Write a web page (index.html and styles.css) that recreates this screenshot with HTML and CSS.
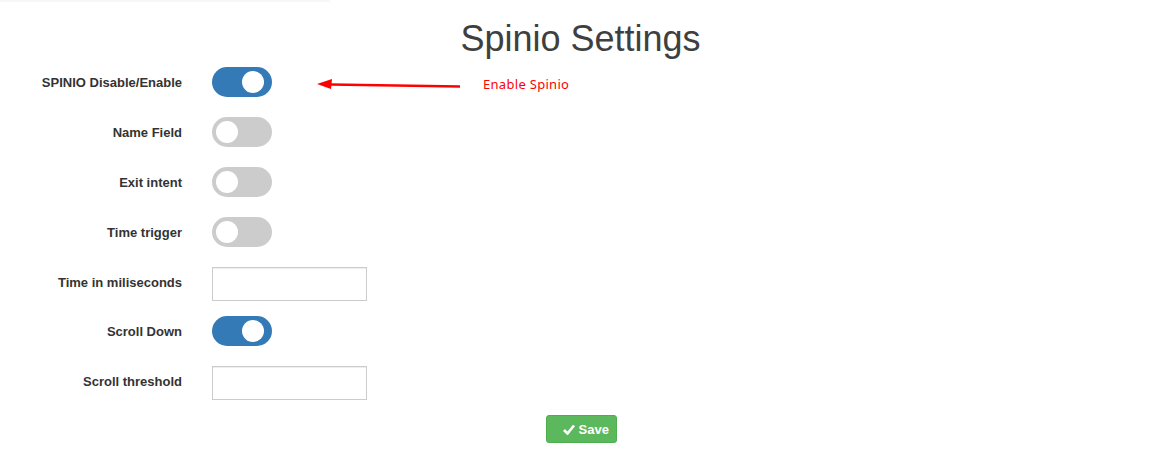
FILE: index.html
```html
<!DOCTYPE html>
<html>
<head>
<meta charset="utf-8">
<link rel="stylesheet" href="styles.css">
</head>
<body>
<div class="topline"></div>
<h1 class="title">Spinio Settings</h1>
<form class="settings">
  <div class="row">
    <label class="lbl">SPINIO Disable/Enable</label>
    <div class="ctl">
      <span class="switch on"><span class="knob"></span></span>
    </div>
    <div class="note">
      <svg class="arrow" width="150" height="14" viewBox="0 0 150 14">
        <path d="M14 6.5 L143 8.5" stroke="#ff0000" stroke-width="2.6" fill="none"/>
        <path d="M0 6 L15 1 L14 11 Z" fill="#ff0000"/>
      </svg>
      <span class="note-text">Enable Spinio</span>
    </div>
  </div>
  <div class="row">
    <label class="lbl">Name Field</label>
    <div class="ctl"><span class="switch"><span class="knob"></span></span></div>
  </div>
  <div class="row">
    <label class="lbl">Exit intent</label>
    <div class="ctl"><span class="switch"><span class="knob"></span></span></div>
  </div>
  <div class="row">
    <label class="lbl">Time trigger</label>
    <div class="ctl"><span class="switch"><span class="knob"></span></span></div>
  </div>
  <div class="row input-row">
    <label class="lbl">Time in miliseconds</label>
    <div class="ctl"><input class="field" type="text"></div>
  </div>
  <div class="row">
    <label class="lbl">Scroll Down</label>
    <div class="ctl"><span class="switch on"><span class="knob"></span></span></div>
  </div>
  <div class="row input-row">
    <label class="lbl">Scroll threshold</label>
    <div class="ctl"><input class="field" type="text"></div>
  </div>
  <div class="actions">
    <button type="button" class="btn-save">
      <svg class="check" width="12" height="11" viewBox="0 0 12 11"><path d="M1 6 L4.5 9.5 L11 1.5" stroke="#fff" stroke-width="2.6" fill="none"/></svg>
      Save
    </button>
  </div>
</form>
</body>
</html>
```
FILE: styles.css
```css
html, body {
  margin: 0;
  padding: 0;
  background: #fff;
}
body {
  font-family: "Liberation Sans", Arial, Helvetica, sans-serif;
  color: #333;
  font-size: 13px;
}
.topline {
  width: 330px;
  height: 2px;
  background: #f7f7f7;
}
.title {
  margin: 17px 0 0 0;
  text-align: center;
  font-size: 36px;
  font-weight: 400;
  line-height: 40px;
  color: #3f3f3f;
}
.settings {
  margin-top: 8px;
  display: flex;
  flex-direction: column;
  gap: 16px;
}
.row {
  display: grid;
  grid-template-columns: 182px auto 1fr;
  column-gap: 30px;
  height: 34px;
  position: relative;
}
.input-row {
  margin-bottom: -1px;
}
.lbl {
  text-align: right;
  font-weight: 700;
  font-size: 13px;
  line-height: 20px;
  padding-top: 6px;
  color: #333;
}
.ctl {
  display: flex;
  align-items: flex-start;
}
.switch {
  display: block;
  width: 60px;
  height: 30px;
  border-radius: 15px;
  background: #cccccc;
  position: relative;
}
.switch.on {
  background: #337ab7;
}
.knob {
  position: absolute;
  top: 4px;
  left: 4px;
  width: 22px;
  height: 22px;
  border-radius: 50%;
  background: #fff;
}
.switch.on .knob {
  left: 30px;
}
.field {
  box-sizing: border-box;
  width: 155px;
  height: 34px;
  border: 1px solid #ccc;
  border-radius: 0;
  box-shadow: inset 0 1px 1px rgba(0,0,0,0.075);
  margin: 0;
  padding: 6px 12px;
}
.note {
  display: flex;
  align-items: center;
  height: 30px;
  margin-left: 15px;
}
.arrow {
  display: block;
  margin-top: 5px;
}
.note-text {
  margin-left: 16px;
  color: #ff0000;
  font-family: "Noto Sans", "Open Sans", sans-serif;
  font-size: 13px;
  letter-spacing: 0.3px;
  margin-top: 4px;
}
.actions {
  display: flex;
  justify-content: center;
  margin-top: 0;
}
.btn-save {
  display: inline-flex;
  align-items: center;
  justify-content: flex-start;
  gap: 4px;
  height: 28px;
  width: 71px;
  background: #5cb85c;
  border: 1px solid #4cae4c;
  border-radius: 3px;
  color: #fff;
  font-family: "Liberation Sans", Arial, sans-serif;
  font-weight: 700;
  font-size: 13px;
  padding: 0 0 0 16px;
  margin-left: 1px;
}
.check {
  display: block;
}
```
